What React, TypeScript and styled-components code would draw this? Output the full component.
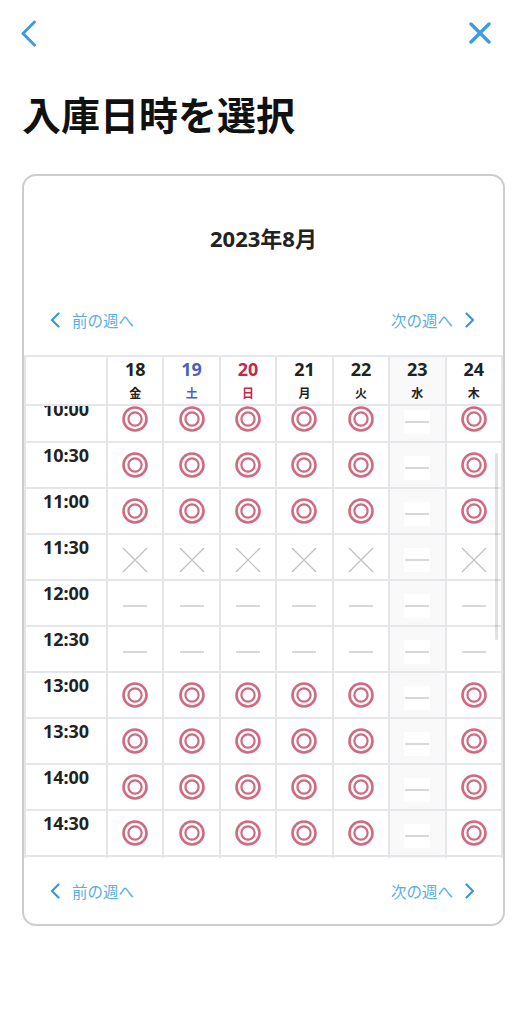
import React, { useLayoutEffect, useRef } from 'react';
import styled, { createGlobalStyle } from 'styled-components';

const GlobalStyle = createGlobalStyle`
  * {
    box-sizing: border-box;
  }

  body {
    margin: 0;
    background: #ffffff;
    font-family: 'Noto Sans', 'Noto Sans CJK JP', sans-serif;
    color: #222222;
  }
`;

const Page = styled.div`
  width: 527px;
  padding: 0 22px;
`;

const TopBar = styled.div`
  height: 66px;
  display: flex;
  align-items: center;
  justify-content: space-between;
  padding: 0 14px 0 0;
  margin-left: -2px;
`;

const IconButton = styled.button`
  border: none;
  background: none;
  padding: 0;
  display: flex;
  align-items: center;
  justify-content: center;
  cursor: pointer;
`;

const Title = styled.h1`
  margin: 24px 0 0;
  font-size: 39px;
  line-height: 47px;
  font-weight: 700;
  color: #111111;
  font-family: 'Noto Sans CJK JP', sans-serif;
`;

const Card = styled.div`
  margin-top: 37px;
  border: 2px solid #cdcdcd;
  border-radius: 14px;
  overflow: hidden;
`;

const MonthHeader = styled.div`
  height: 122px;
  display: flex;
  align-items: center;
  justify-content: center;
  font-size: 22px;
  font-weight: 700;
  color: #222222;
`;

type WeekNavProps = {
  bottom?: boolean;
};

const WeekNav = styled.div<WeekNavProps>`
  height: ${props => (props.bottom ? '66px' : '44px')};
  margin-bottom: ${props => (props.bottom ? '0' : '13px')};
  display: flex;
  align-items: center;
  justify-content: space-between;
  padding: 0 28px 0 26px;
`;

const NavLink = styled.a`
  display: flex;
  align-items: center;
  gap: 12px;
  font-family: 'Noto Sans CJK JP', sans-serif;
  font-size: 15.5px;
  color: #5aaee3;
  text-decoration: none;
  cursor: pointer;
`;

const TableWrap = styled.div`
  position: relative;
`;

const Scroller = styled.div`
  height: 503px;
  overflow-y: auto;
  border-top: 2px solid #e3e6ea;
  border-left: 2px solid #e3e6ea;
  scrollbar-width: none;

  &::-webkit-scrollbar {
    display: none;
  }
`;

const ScrollIndicator = styled.div`
  position: absolute;
  top: 98px;
  right: 5px;
  width: 3px;
  height: 187px;
  border-radius: 2px;
  background: rgba(0, 0, 0, 0.12);
  pointer-events: none;
`;

const GridRow = styled.div`
  display: grid;
  grid-template-columns: 82px repeat(7, 1fr);
`;

const HeaderRow = styled(GridRow)`
  position: sticky;
  top: 0;
  z-index: 1;
  background: #ffffff;
`;

type CellProps = {
  closed?: boolean;
};

const Cell = styled.div<CellProps>`
  height: 46px;
  border-right: 2px solid #e4e6ea;
  border-bottom: 2px solid #e4e6ea;
  background: ${props => (props.closed ? '#f9f9fa' : '#ffffff')};
  display: flex;
  align-items: center;
  justify-content: center;
`;

const HeaderCell = styled(Cell)`
  height: 49px;
  flex-direction: column;
  justify-content: flex-start;
  padding-top: 1px;
`;

type DayProps = {
  tone: 'normal' | 'sat' | 'sun';
};

const toneColor = (tone: DayProps['tone']) =>
  tone === 'sat' ? '#4a63b8' : tone === 'sun' ? '#c4294a' : '#222222';

const DayNumber = styled.span<DayProps>`
  font-size: 18px;
  line-height: 22px;
  font-weight: 700;
  color: ${props => toneColor(props.tone)};
`;

const DayName = styled.span<DayProps>`
  margin-top: 5px;
  font-family: 'Noto Sans CJK JP', sans-serif;
  font-size: 12px;
  line-height: 16px;
  font-weight: 700;
  color: ${props => toneColor(props.tone)};
`;

const TimeCell = styled(Cell)`
  align-items: flex-start;
  font-size: 18px;
  line-height: 24px;
  font-weight: 700;
  color: #222222;
`;

const MarkBox = styled.div<{ shift: number }>`
  display: flex;
  align-items: center;
  justify-content: center;
  width: 26px;
  height: 24px;
  background: #ffffff;
  margin-top: ${props => props.shift}px;
`;

type Mark = 'o' | 'x' | '-';

const DoubleCircle = () => (
  <svg width="26" height="26" viewBox="0 0 26 26">
    <circle cx="13" cy="13" r="11.5" fill="none" stroke="#d06a80" strokeWidth="2.6" />
    <circle cx="13" cy="13" r="6.6" fill="none" stroke="#d06a80" strokeWidth="2.2" />
  </svg>
);

const Cross = () => (
  <svg width="26" height="26" viewBox="0 0 26 26">
    <path d="M1 1 L25 25 M25 1 L1 25" stroke="#c0c0c0" strokeWidth="1.2" />
  </svg>
);

const Dash = () => (
  <svg width="24" height="2" viewBox="0 0 24 2">
    <path d="M0 1 H24" stroke="#c0c0c0" strokeWidth="1.2" />
  </svg>
);

const MarkIcon = ({ mark }: { mark: Mark }) => {
  if (mark === 'o') return <DoubleCircle />;
  if (mark === 'x') {
    return (
      <MarkBox shift={6}>
        <Cross />
      </MarkBox>
    );
  }
  return (
    <MarkBox shift={6}>
      <Dash />
    </MarkBox>
  );
};

const ChevronLeft = () => (
  <svg width="10" height="16" viewBox="0 0 10 16">
    <path
      d="M8.5 1.5 L2 8 L8.5 14.5"
      fill="none"
      stroke="#3b97d8"
      strokeWidth="2.2"
      strokeLinecap="round"
      strokeLinejoin="round"
    />
  </svg>
);

const ChevronRight = () => (
  <svg width="10" height="16" viewBox="0 0 10 16">
    <path
      d="M1.5 1.5 L8 8 L1.5 14.5"
      fill="none"
      stroke="#3b97d8"
      strokeWidth="2.2"
      strokeLinecap="round"
      strokeLinejoin="round"
    />
  </svg>
);

const BackIcon = () => (
  <svg width="17" height="27" viewBox="0 0 17 27">
    <path
      d="M14.5 2 L3 13.5 L14.5 25"
      fill="none"
      stroke="#3d9be0"
      strokeWidth="3"
      strokeLinecap="round"
      strokeLinejoin="round"
    />
  </svg>
);

const CloseIcon = () => (
  <svg width="22" height="22" viewBox="0 0 22 22">
    <path
      d="M2 2 L20 20 M20 2 L2 20"
      fill="none"
      stroke="#3d9be0"
      strokeWidth="3.4"
      strokeLinecap="round"
    />
  </svg>
);

const days: { num: number; name: string; tone: DayProps['tone']; closed?: boolean }[] = [
  { num: 18, name: '金', tone: 'normal' },
  { num: 19, name: '土', tone: 'sat' },
  { num: 20, name: '日', tone: 'sun' },
  { num: 21, name: '月', tone: 'normal' },
  { num: 22, name: '火', tone: 'normal' },
  { num: 23, name: '水', tone: 'normal', closed: true },
  { num: 24, name: '木', tone: 'normal' },
];

const open: Mark[] = ['o', 'o', 'o', 'o', 'o', '-', 'o'];
const full: Mark[] = ['x', 'x', 'x', 'x', 'x', '-', 'x'];
const none: Mark[] = ['-', '-', '-', '-', '-', '-', '-'];

const slots: { time: string; marks: Mark[] }[] = [
  { time: '10:00', marks: open },
  { time: '10:30', marks: open },
  { time: '11:00', marks: open },
  { time: '11:30', marks: full },
  { time: '12:00', marks: none },
  { time: '12:30', marks: none },
  { time: '13:00', marks: open },
  { time: '13:30', marks: open },
  { time: '14:00', marks: open },
  { time: '14:30', marks: open },
  { time: '15:00', marks: open },
  { time: '15:30', marks: open },
  { time: '16:00', marks: open },
  { time: '16:30', marks: open },
  { time: '17:00', marks: open },
  { time: '17:30', marks: open },
];

const WeekNavigation = ({ bottom }: WeekNavProps) => (
  <WeekNav bottom={bottom}>
    <NavLink>
      <ChevronLeft />
      前の週へ
    </NavLink>
    <NavLink>
      次の週へ
      <ChevronRight />
    </NavLink>
  </WeekNav>
);

export const App = () => {
  const scrollRef = useRef<HTMLDivElement>(null);

  useLayoutEffect(() => {
    if (scrollRef.current) scrollRef.current.scrollTop = 9;
  }, []);

  return (
    <Page>
      <GlobalStyle />
      <TopBar>
        <IconButton aria-label="戻る">
          <BackIcon />
        </IconButton>
        <IconButton aria-label="閉じる">
          <CloseIcon />
        </IconButton>
      </TopBar>
      <Title>入庫日時を選択</Title>
      <Card>
        <MonthHeader>2023年8月</MonthHeader>
        <WeekNavigation />
        <TableWrap>
          <Scroller ref={scrollRef}>
            <HeaderRow>
              <HeaderCell />
              {days.map(day => (
                <HeaderCell key={day.num} closed={day.closed}>
                  <DayNumber tone={day.tone}>{day.num}</DayNumber>
                  <DayName tone={day.tone}>{day.name}</DayName>
                </HeaderCell>
              ))}
            </HeaderRow>
            {slots.map(slot => (
              <GridRow key={slot.time}>
                <TimeCell>{slot.time}</TimeCell>
                {slot.marks.map((mark, i) => (
                  <Cell key={i} closed={days[i].closed}>
                    <MarkIcon mark={mark} />
                  </Cell>
                ))}
              </GridRow>
            ))}
          </Scroller>
          <ScrollIndicator />
        </TableWrap>
        <WeekNavigation bottom />
      </Card>
    </Page>
  );
};

export default App;
